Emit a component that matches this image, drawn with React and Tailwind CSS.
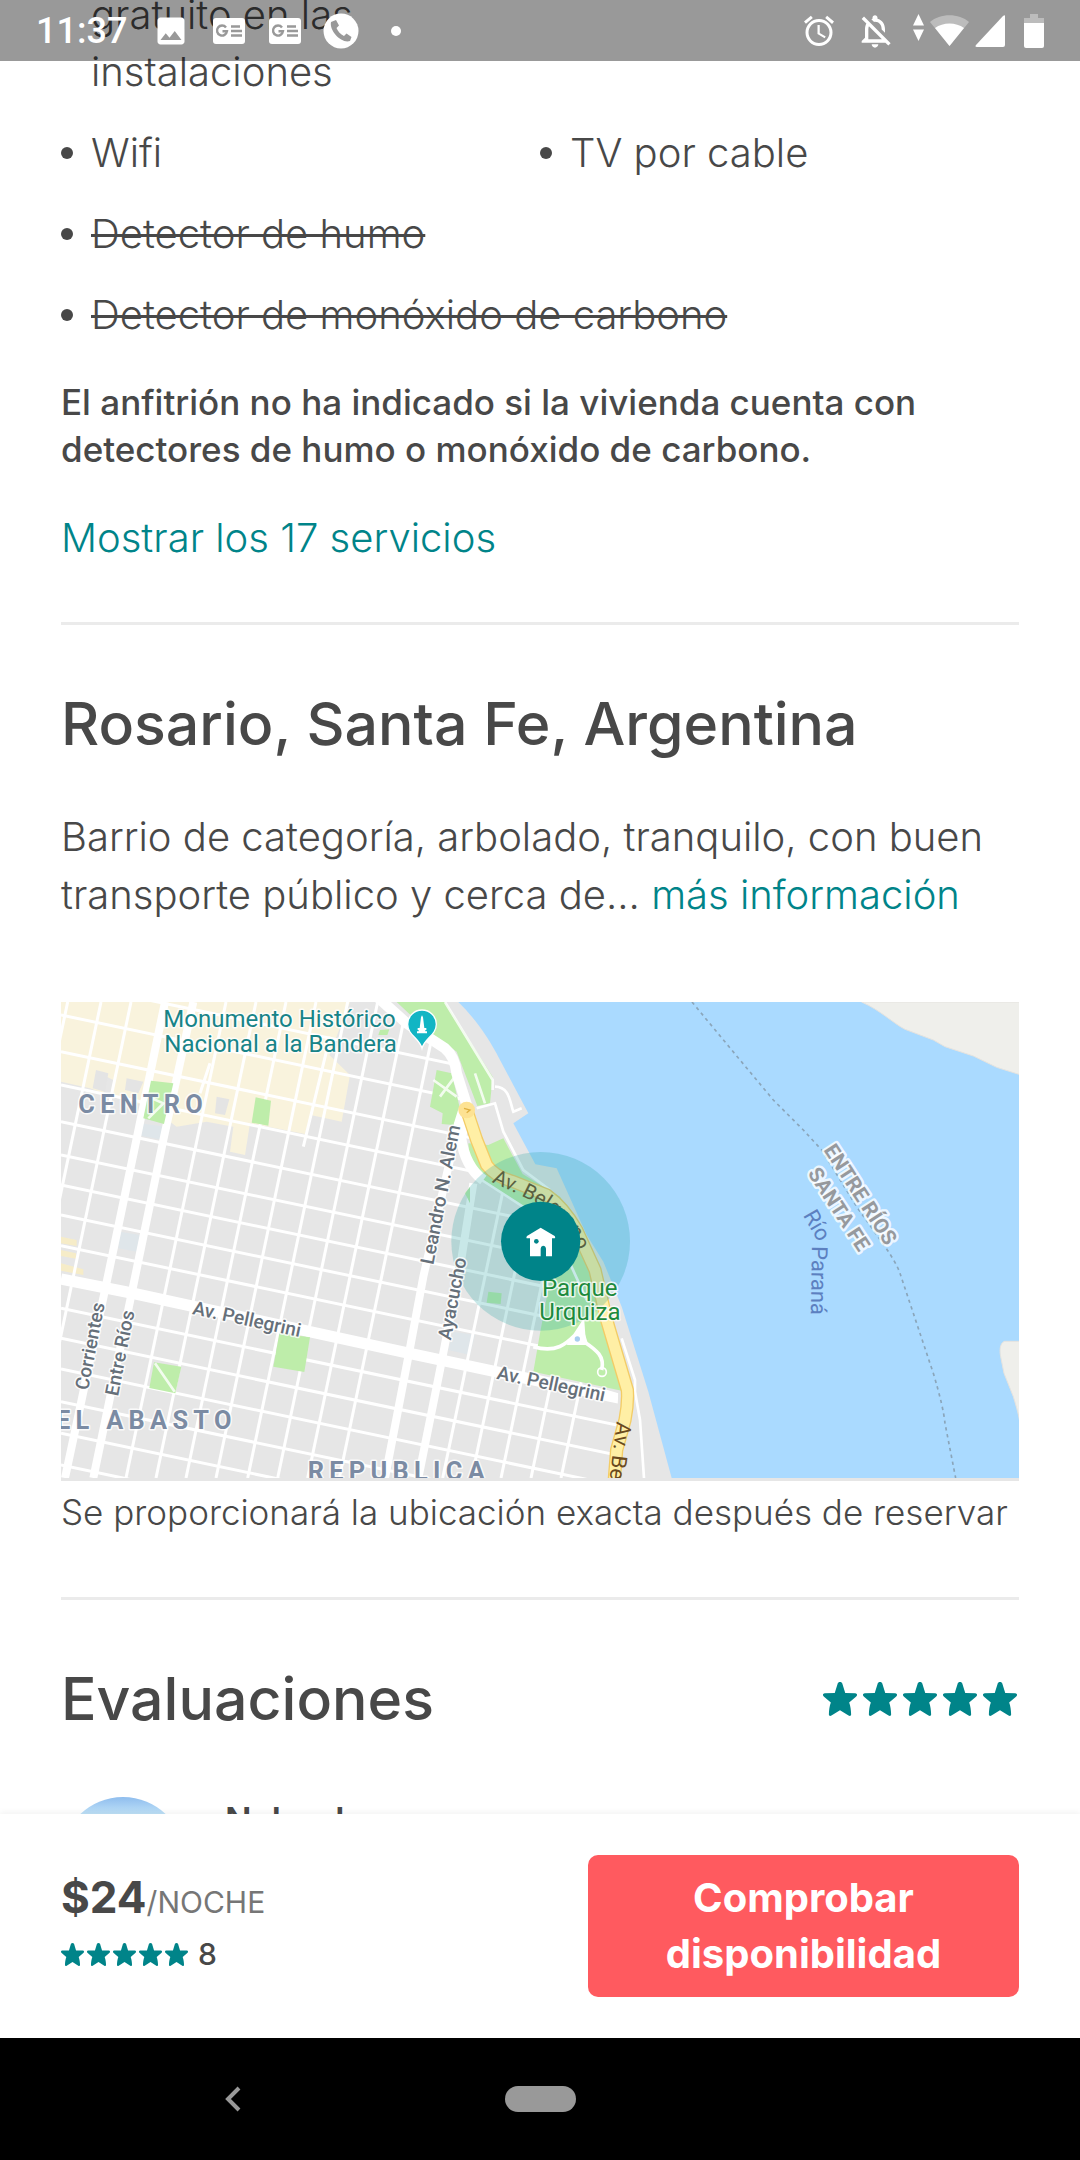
import { MdAlarm, MdImage, MdOutlineNotificationsOff } from 'react-icons/md';

const amenities = [
  { label: 'gratuito en las instalaciones', bullet: false },
  { label: 'Wifi', bullet: true },
  { label: 'TV por cable', bullet: true },
  { label: 'Detector de humo', bullet: true, missing: true },
  { label: 'Detector de monóxido de carbono', bullet: true, missing: true },
];

function Star({ className }) {
  return (
    <svg viewBox="0 0 33 33" className={className} aria-hidden="true">
      <path
        fill="currentColor"
        d="M14.2 1.6C14.9-.4 18.1-.4 18.8 1.6L21.6 10.6L31.3 10.9C33.5 11.2 33.5 13.2 32 14.4L25.4 20C26.7 23.6 27.2 27.6 27.3 31.6C27.3 33 26 33.3 24.8 32.6L16.5 27.4L8.2 32.6C7 33.3 5.7 33 5.7 31.6C5.8 27.6 6.3 23.6 7.6 20L1 14.4C-.5 13.2-.5 11.2 1.7 10.9L11.4 10.6Z"
      />
    </svg>
  );
}

function Stars({ className, starClassName }) {
  return (
    <div role="img" aria-label="5 de 5" className={`flex text-[#008489] ${className}`}>
      {[0, 1, 2, 3, 4].map((i) => (
        <Star key={i} className={starClassName} />
      ))}
    </div>
  );
}

function NewsIcon() {
  return (
    <svg viewBox="0 0 32 26" className="w-8" aria-hidden="true">
      <rect width="32" height="26" rx="3" fill="white" />
      <g fill="none" stroke="#999" strokeWidth="2.4">
        <path d="M13 9.5A5 5 0 1 0 14 13.2H9.5" />
        <path d="M18 8.5H27M18 13H29M18 17.5H29" />
      </g>
    </svg>
  );
}

function StatusBar() {
  return (
    <header className="absolute inset-x-0 top-0 z-10 flex h-[61px] items-center bg-black/40 px-9 text-white">
      <span className="font-[Roboto] text-[36px] font-medium">11:37</span>
      <div className="ml-[26px] flex items-center gap-6">
        <MdImage className="size-9" />
        <NewsIcon />
        <NewsIcon />
        <svg viewBox="0 0 36 36" className="-ml-[2px] w-9" aria-hidden="true">
          <circle cx="18" cy="18" r="17.5" fill="white" />
          <path
            fill="#999"
            d="M8 9L13 7L16 12.5L13.5 15C15 18.5 17.5 21.5 21 23L23.5 20.5L28.5 24L27 28C19 31 6 18 8 9Z"
          />
        </svg>
        <span className="ml-2 size-[10px] rounded-full bg-white" />
      </div>
      <div className="ml-auto flex items-center">
        <MdAlarm className="size-9" />
        <MdOutlineNotificationsOff className="ml-[18px] size-10" />
        <svg viewBox="0 0 56 34" className="ml-[18px] w-14" fill="white" aria-hidden="true">
          <path d="M5.5 0L11 11.5H0ZM5.5 27L0 15.5H11Z" />
          <path opacity=".35" d="M17 8C27-1 46-1 56 8L36.5 32Z" />
          <path d="M22 14C30 8 43 8 51 14L36.5 32Z" />
        </svg>
        <svg viewBox="0 0 31 32" className="ml-[6px] w-[31px]" fill="white" aria-hidden="true">
          <path d="M30 1V30Q30 32 28 32H2Q-.5 32 1 30L28 1Q30-.5 30 1Z" />
        </svg>
        <svg viewBox="0 0 20 34" className="ml-[18px] w-5" fill="white" aria-hidden="true">
          <path opacity=".35" d="M6 0H14V4H20V9H0V4H6Z" />
          <path d="M0 9H20V32Q20 34 18 34H2Q0 34 0 32Z" />
        </svg>
      </div>
    </header>
  );
}

// Calles menores: altura en el borde izquierdo / posición a media altura
const streetsEast = [5, 105, 215, 315, 425, 525, 615, 705, 797, 985, 1075, 1167, 1265, 1360, 1455];
const streetsSouth = [-50, 50, 140, 425, 515, 605, 695, 790, 880, 970, 1065, 1375, 1462, 1550, 1640, 1730];

function LocationMap() {
  return (
    <svg
      viewBox="63 66 2874 1428"
      className="block w-full font-[Roboto]"
      role="img"
      aria-label="Mapa de Rosario"
    >
      <defs>
        <clipPath id="city">
          <path d="M63 66H1040L1250 260L1290 400L1300 560L1420 650L1530 740L1600 900L1500 1170L1735 1240L1720 1494H63Z" />
        </clipPath>
        <path id="belgrano" d="M1354 606C1450 650 1530 680 1575 740C1600 770 1610 800 1640 900" />
      </defs>

      <rect x="63" y="66" width="2874" height="1434" fill="#e6e6e6" />

      {/* Zona comercial */}
      <path
        fill="#f9f3dd"
        d="M63 66H930L868 225L930 285L905 425L812 405L795 462L630 430L615 525L570 515L580 440L500 425L410 440L330 380L215 350L220 300L200 290L190 340L150 325L63 305Z"
      />
      <path fill="#e4e4e4" d="M168 270L205 280L195 335L158 325ZM530 350L568 358L555 405L525 400ZM260 295L310 305L295 340L255 330Z" />
      <path fill="#faedc0" d="M63 770L110 780V798L63 790ZM63 810L108 820V836L63 828ZM63 850L130 868V885L63 872Z" opacity=".8" />
      <path fill="#dfe6ea" d="M300 430L378 440L370 480L290 465ZM240 755L300 765L290 815L235 805ZM1240 1055L1305 1065L1290 1125L1225 1110Z" />

      {/* Calles */}
      <g clipPath="url(#city)" fill="none" stroke="white">
        <g strokeWidth="9">
          {streetsEast.map((y) => (
            <line key={y} x1="63" y1={y} x2="1863" y2={y + 378} />
          ))}
          {streetsSouth.map((x) => (
            <line key={x} x1={x + 133} y1="66" x2={x - 167} y2="1494" />
          ))}
          <path d="M510 250L480 340M870 170L790 500" />
        </g>
        <g strokeWidth="24">
          <path d="M375 66L285 500L195 930L75 1494" />
          <path d="M460 66L370 480L275 940L160 1494" />
          <path d="M1262 390L1230 540L1150 890L1105 1130L1035 1494" />
          <path d="M1300 610L1262 850L1200 1170L1135 1494" />
        </g>
        <path strokeWidth="34" d="M63 897L280 940L1100 1118L1740 1255" />
      </g>

      {/* Parques */}
      <g fill="#beedaa">
        <path d="M1070 66H1215L1358 290L1350 370L1312 378L1250 215L1170 160Z" />
        <path d="M333 302L400 310L372 432L310 415Z" />
        <path d="M647 352L693 362L685 437L635 428Z" />
        <path d="M718 1060L810 1072L793 1176L700 1160Z" />
        <path d="M342 1147L424 1160L406 1240L328 1224Z" />
        <path d="M1190 270L1235 280L1258 378L1240 435L1205 432L1208 400L1170 380Z" />
        <path d="M1285 490L1345 495L1390 475L1448 582L1560 650L1650 800L1700 960L1745 1232L1480 1175L1500 1060L1530 900L1480 700L1330 600L1290 550Z" />
        <path d="M1020 150L1048 148L1042 165L1015 165ZM1345 935L1385 940L1382 972L1340 968ZM1275 640L1290 620V670Z" />
      </g>
      <g fill="none" stroke="white" strokeWidth="8">
        <path d="M345 1150L404 1235M325 350L370 370L325 415M1200 350L1245 290M1180 300L1250 350M1305 280L1335 370M1215 66L1358 300V330" opacity=".8" />
        <path d="M1365 320C1410 320 1410 370 1420 395L1445 385M1310 385L1365 370L1390 455L1450 570L1530 630M1745 1075L1785 1200V1235L1800 1320L1812 1494M1325 600L1480 700M1590 850L1640 960" />
        <path d="M1480 1100C1550 1120 1580 1090 1605 1065L1628 1030L1632 1085C1670 1110 1695 1130 1685 1170" strokeWidth="11" />
        <circle cx="1686" cy="1176" r="13" strokeWidth="5" />
      </g>
      <path fill="white" d="M1625 1030L1645 1095L1580 1095Z" />
      <circle cx="1612" cy="1077" r="8" fill="#a9cdf0" />

      {/* Costanera */}
      <path
        fill="none"
        stroke="white"
        strokeWidth="32"
        d="M1000 40L1100 130L1215 205Q1245 230 1250 280L1285 390L1262 470Q1275 560 1330 600"
      />
      <g fill="none" strokeLinecap="round" strokeLinejoin="round">
        <path
          stroke="#f3cc66"
          strokeWidth="40"
          d="M1280 390L1310 480L1340 555Q1365 590 1420 605L1520 645Q1570 680 1610 750L1665 870L1700 1020L1762 1230Q1765 1270 1755 1320L1730 1410L1722 1510"
        />
        <path
          stroke="#ffefa5"
          strokeWidth="32"
          d="M1280 390L1310 480L1340 555Q1365 590 1420 605L1520 645Q1570 680 1610 750L1665 870L1700 1020L1762 1230Q1765 1270 1755 1320L1730 1410L1722 1510"
        />
      </g>
      <circle cx="1280" cy="390" r="25" fill="#fde293" />
      <path d="M1272 385L1290 390L1280 398" fill="none" stroke="#e0b040" strokeWidth="4" />

      {/* Río Paraná */}
      <path
        fill="#aadaff"
        d="M1255 66C1300 110 1345 170 1380 240L1465 400L1420 430L1486 553L1550 565L1640 765L1690 845L1745 980L1770 1060L1825 1235L1895 1494H2937V66Z"
      />
      <path
        fill="#efefeb"
        stroke="#e5e3df"
        strokeWidth="3"
        d="M2465 66C2520 90 2560 130 2595 148L2680 180L2715 200L2800 228L2870 262L2940 284V66ZM2940 1084H2893C2880 1090 2878 1110 2882 1130L2892 1180L2920 1250C2932 1290 2935 1300 2940 1330Z"
      />
      <path
        fill="none"
        stroke="#8aa5ba"
        strokeWidth="5"
        strokeDasharray="10 11"
        d="M1956 66L2100 240L2200 360L2290 450L2345 510L2450 680L2535 800Q2570 850 2580 880L2620 1000L2680 1180Q2710 1280 2715 1330L2747 1494"
      />

      {/* Avenida Belgrano */}
      <g fill="#6b4a1e">
        <text fontSize="62">
          <textPath href="#belgrano">Av. Belgrano</textPath>
        </text>
        <text fontSize="64" transform="translate(1730 1324) rotate(97)">Av. Belgrano</text>
      </g>

      {/* Zona aproximada */}
      <circle cx="1502" cy="784" r="268" fill="#24a2a4" fillOpacity=".25" />

      {/* Etiquetas */}
      <g stroke="white" strokeWidth="9" strokeOpacity=".8" strokeLinejoin="round" paintOrder="stroke">
        <g fill="#188488" fontSize="72">
          <text x="370" y="142">Monumento Histórico</text>
          <text x="373" y="215">Nacional a la Bandera</text>
        </g>
        <g fill="#7b8ba3" fontSize="76" fontWeight="700" letterSpacing="16">
          <text x="115" y="399">CENTRO</text>
          <text x="48" y="1347">EL ABASTO</text>
          <text x="803" y="1500">REPUBLICA</text>
        </g>
        <g fill="#66707a" fontSize="57" fontWeight="500">
          <text transform="translate(455 1002) rotate(12)">Av. Pellegrini</text>
          <text transform="translate(1368 1196) rotate(12)">Av. Pellegrini</text>
          <text transform="translate(1180 856) rotate(-79)">Leandro N. Alem</text>
          <text transform="translate(1232 1082) rotate(-79)">Ayacucho</text>
          <text transform="translate(144 1232) rotate(-79)">Corrientes</text>
          <text transform="translate(234 1250) rotate(-79)">Entre Ríos</text>
        </g>
        <g fill="#96999d" fontSize="62" fontWeight="700" strokeWidth="14">
          <text transform="translate(2350 510) rotate(57)">ENTRE RÍOS</text>
          <text transform="translate(2302 580) rotate(57)">SANTA FE</text>
        </g>
        <g fill="#1d8a3c" fontSize="72">
          <text x="1506" y="947">Parque</text>
          <text x="1498" y="1020">Urquiza</text>
        </g>
      </g>
      <g fill="#5c80c0" fontSize="66">
        <text transform="translate(2288 706) rotate(60)">Río</text>
        <text transform="translate(2316 798) rotate(91)">Paraná</text>
      </g>

      {/* Monumento */}
      <path
        fill="#12b5c4"
        stroke="white"
        strokeWidth="4"
        d="M1146 205C1138 175 1103 165 1103 133A43 43 0 0 1 1189 133C1189 165 1154 175 1146 205Z"
      />
      <path fill="white" d="M1143 112L1146 106L1149 112L1153 144H1159V150H1156V154H1161V160H1131V154H1136V150H1133V144H1139Z" />

      {/* Vivienda */}
      <circle cx="1502" cy="784" r="119" fill="#008489" />
      <path
        fill="white"
        d="M1502 743L1544 768Q1548 775 1542 775H1536V829H1518V806Q1517 797 1509 797Q1502 798 1502 806V829H1470V775H1462Q1457 775 1461 768Z"
      />
      <circle cx="1489" cy="784" r="7" fill="#008489" />
    </svg>
  );
}

export default function App() {
  return (
    <div className="relative flex h-screen flex-col overflow-hidden bg-white font-[Inter,sans-serif] text-[#484848]">
      <StatusBar />

      <main className="min-h-0 flex-1 overflow-hidden px-[61px]">
        <ul className="-mt-[14px] grid grid-cols-2 gap-y-6 text-[40px] leading-[57px] font-light">
          {amenities.map(({ label, bullet, missing }) => (
            <li
              key={label}
              className={`flex items-start ${bullet ? '' : 'col-span-2 w-1/2'} ${missing ? 'col-span-2' : ''}`}
            >
              <span className={`mt-[23px] mr-[18px] size-3 shrink-0 rounded-full ${bullet ? 'bg-[#484848]' : ''}`} />
              <span className={missing ? 'line-through decoration-[3px]' : ''}>{label}</span>
            </li>
          ))}
        </ul>
        <p className="mt-9 text-[35px] leading-[47px] font-medium">
          El anfitrión no ha indicado si la vivienda cuenta con detectores de humo o monóxido de carbono.
        </p>
        <a href="#servicios" className="mt-9 block text-[40px] leading-[57px] font-light text-[#008489]">
          Mostrar los 17 servicios
        </a>

        <section className="mt-14 border-t-[3px] border-[#ebebeb] pt-[63px]">
          <h2 className="text-[59px] leading-[72px] font-medium">Rosario, Santa Fe, Argentina</h2>
          <p className="mt-12 text-[40px] leading-[58px] font-light">
            Barrio de categoría, arbolado, tranquilo, con buen transporte público y cerca de...{' '}
            <a href="#barrio" className="text-[#008489]">más información</a>
          </p>
          <div className="mt-[78px] border-b-[3px] border-[#e6e6e6]">
            <LocationMap />
          </div>
          <p className="mt-2 text-[35px] leading-[47px] font-light">
            Se proporcionará la ubicación exacta después de reservar
          </p>
        </section>

        <section className="mt-[61px] border-t-[3px] border-[#ebebeb] pt-[63px]">
          <div className="flex items-center justify-between">
            <h2 className="text-[59px] leading-[72px] font-medium">Evaluaciones</h2>
            <Stars className="mr-[2px] gap-[6px]" starClassName="size-[34px]" />
          </div>
          <div className="mt-[62px] flex gap-10">
            <div className="size-[124px] rounded-full bg-linear-to-b from-[#8fbdee] to-[#d5f2fb] to-20%" />
            <p className="text-[35px] leading-[47px] font-semibold">Nahuel</p>
          </div>
        </section>
      </main>

      <footer className="z-10 flex items-center justify-between bg-white px-[61px] py-[41px] shadow-[0_-2px_6px_rgba(0,0,0,0.05)]">
        <div>
          <p className="text-[44px] leading-[57px] font-bold">
            $24<span className="text-[30px] leading-none font-normal text-[#767676]">/NOCHE</span>
          </p>
          <div className="flex items-center gap-[10px] text-[30px] leading-[57px] font-medium">
            <Stars className="gap-[3px]" starClassName="size-[23px]" />
            8
          </div>
        </div>
        <button
          type="button"
          className="w-[45%] rounded-[10px] bg-[#ff5a5f] px-10 py-[15px] text-[40px] leading-[56px] font-bold text-white"
        >
          Comprobar disponibilidad
        </button>
      </footer>

      <nav className="grid h-[122px] grid-cols-[465px_150px_1fr] items-center justify-items-center bg-black text-[#999]">
        <button type="button" aria-label="Atrás">
          <svg viewBox="0 0 16 26" className="h-[26px] w-4">
            <path d="M14 2L3 13L14 24" fill="none" stroke="currentColor" strokeWidth="4" />
          </svg>
        </button>
        <button type="button" aria-label="Inicio" className="h-[26px] w-[71px] rounded-full bg-[#999]" />
      </nav>
    </div>
  );
}
